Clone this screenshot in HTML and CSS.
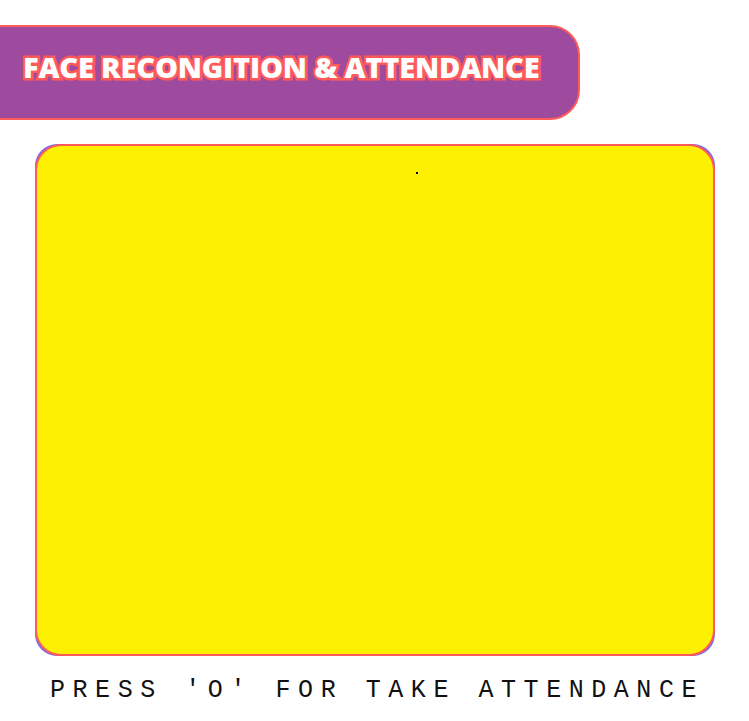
FILE: index.html
```html
<!DOCTYPE html>
<html lang="en">
<head>
    <meta charset="UTF-8">
    <title>Face Recognition &amp; Attendance</title>
    <link rel="stylesheet" href="styles.css">
</head>
<body>
    <div class="banner">
        <h1 class="title">FACE RECONGITION &amp; ATTENDANCE</h1>
    </div>

    <div class="frame">
        <div class="camera">
            <span class="dot"></span>
        </div>
    </div>

    <p class="hint">PRESS 'O' FOR TAKE ATTENDANCE</p>
</body>
</html>
```

FILE: styles.css
```css
body {
    margin: 0;
    background: #ffffff;
    font-family: "Open Sans", Arial, sans-serif;
}

.banner {
    box-sizing: border-box;
    width: 592px;
    height: 95px;
    margin: 25px 0 0 -12px;
    padding: 0 0 0 33px;
    background: #9e4a9f;
    border: 2px solid #ff5a5a;
    border-radius: 0 30px 30px 0;
    display: flex;
    align-items: center;
}

.title {
    margin: 0 0 12px 0;
    font-size: 29px;
    font-weight: 800;
    color: #ffffff;
    letter-spacing: -0.18px;
    -webkit-text-stroke: 5px #ff5a5a;
    paint-order: stroke fill;
}

.frame {
    box-sizing: border-box;
    width: 680px;
    height: 512px;
    margin: 24px 0 0 35px;
    background: #7a6cf0;
    border-radius: 22px;
}

.camera {
    box-sizing: border-box;
    position: relative;
    width: 100%;
    height: 100%;
    background: #fdf000;
    border: 2px solid #ff5a5a;
    border-radius: 26px;
}

.dot {
    position: absolute;
    left: 379px;
    top: 26px;
    width: 2px;
    height: 2px;
    background: #000000;
}

.hint {
    margin: 20px 0 0 50px;
    font-family: "Liberation Mono", "DejaVu Sans Mono", monospace;
    font-size: 25px;
    letter-spacing: 7.55px;
    color: #111111;
    line-height: 30px;
}
```
